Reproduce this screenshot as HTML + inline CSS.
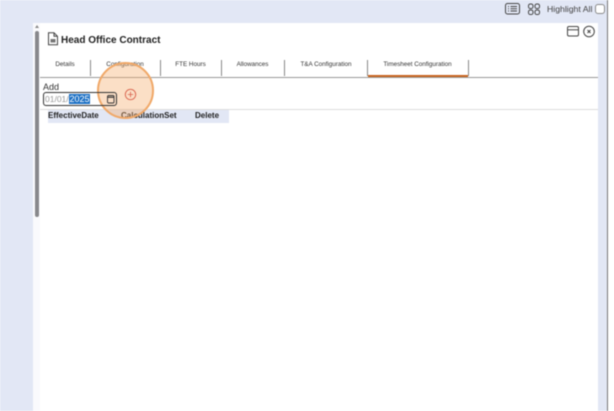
<!DOCTYPE html>
<html><head><meta charset="utf-8">
<style>
html,body{margin:0;padding:0;width:614px;height:411px;overflow:hidden;background:#fff}
body{position:relative;font-family:"Liberation Sans",sans-serif;color:#222}
#w{position:absolute;left:0;top:0;width:614px;height:411px;filter:blur(.4px)}
.a{position:absolute}
.t{position:absolute;top:60px;font-size:6.3px;line-height:9px;color:#333;white-space:nowrap;transform:translateX(-50%)}
.s{position:absolute;top:60px;width:1px;height:16px;background:#888}
.h{position:absolute;top:110px;font-size:8px;line-height:11px;font-weight:bold;color:#222;white-space:nowrap}
</style></head><body>
<div id="w">
<div class="a" style="left:0;top:0;width:607px;height:411px;background:#e2e7f5"></div>
<div class="a" style="left:607px;top:0;width:1px;height:411px;background:#777"></div>
<div class="a" style="left:33px;top:23px;width:565px;height:388px;background:#fff"></div>
<div class="a" style="left:33px;top:23px;width:7px;height:388px;background:#fafafd"></div>
<div class="a" style="left:35px;top:31px;width:4px;height:186px;background:#88888c;border-radius:2px"></div>
<div class="a" style="left:35px;top:25px;width:0;height:0;border-left:2px solid transparent;border-right:2px solid transparent;border-bottom:3px solid #888"></div>

<svg class="a" style="left:504px;top:2px" width="18" height="14" viewBox="0 0 18 14" fill="none" stroke="#444" stroke-width="1">
<rect x="1.500" y="1.500" width="14" height="10.500" rx="2"/><path d="M4 4.500h1M4 6.800h1M4 9h1M6.500 4.500h6.500M6.500 6.800h6.500M6.500 9h6.500"/></svg>
<svg class="a" style="left:527px;top:3px" width="14" height="13" viewBox="0 0 14 13" fill="none" stroke="#444" stroke-width="1">
<rect x="1.500" y="1" width="4.500" height="4.500" rx="1.800"/><rect x="8" y="1" width="4.500" height="4.500" rx="1.800"/>
<rect x="1.500" y="7" width="4.500" height="4.500" rx="1.800"/><rect x="8" y="7" width="4.500" height="4.500" rx="1.800"/></svg>
<div class="a" style="left:547px;top:4px;font-size:8.700px;line-height:11px;color:#444;white-space:nowrap">Highlight All</div>
<div class="a" style="left:595px;top:4px;width:8px;height:8px;border:1px solid #888;border-radius:3px;background:#fff"></div>

<svg class="a" style="left:47px;top:32px" width="12" height="14" viewBox="0 0 12 14" fill="none" stroke="#444" stroke-width="1">
<path d="M1.500 .8h5.500l3.500 3.500v8.500h-9zM7 .8v3.500h3.500"/><rect x="3.500" y="7" width="5" height="3.500" fill="#777" stroke="none"/></svg>
<div class="a" style="left:61px;top:33.500px;font-size:10px;line-height:13px;font-weight:bold;color:#222;white-space:nowrap">Head Office Contract</div>

<svg class="a" style="left:566px;top:24px" width="30" height="14" viewBox="0 0 30 14" fill="none" stroke="#444" stroke-width="1">
<rect x="1.500" y="2.500" width="11" height="9.500" rx="1.500"/><path d="M1.500 5.800h11"/>
<circle cx="23" cy="7.500" r="5.300"/><path d="M21.500 6l3 3M24.500 6l-3 3"/></svg>

<div class="t" style="left:65px">Details</div>
<div class="t" style="left:125px">Configuration</div>
<div class="t" style="left:190.500px">FTE Hours</div>
<div class="t" style="left:252.500px">Allowances</div>
<div class="t" style="left:326px">T&amp;A Configuration</div>
<div class="t" style="left:417.500px">Timesheet Configuration</div>
<div class="s" style="left:90px"></div>
<div class="s" style="left:160px"></div>
<div class="s" style="left:221px"></div>
<div class="s" style="left:284px"></div>
<div class="s" style="left:367px"></div>
<div class="s" style="left:468px"></div>
<div class="a" style="left:40px;top:77px;width:558px;height:1px;background:#999"></div>
<div class="a" style="left:368px;top:75px;width:100px;height:2px;background:#c8641e"></div>

<div class="a" style="left:43px;top:82px;font-size:9px;line-height:11px;color:#333">Add</div>
<div class="a" style="left:45px;top:94px;font-size:8.500px;line-height:10px;color:#999;white-space:nowrap">01/01/</div>
<div class="a" style="left:69px;top:94px;width:21px;height:10px;background:#1a6fc4;color:#fff;font-size:9px;line-height:10px;text-align:center">2025</div>

<div class="a" style="left:40px;top:109px;width:558px;height:1px;background:#ddd"></div>
<div class="a" style="left:48px;top:110px;width:181px;height:13px;background:#e2e7f5"></div>
<div class="h" style="left:48px">EffectiveDate</div>
<div class="h" style="left:121px">CalculationSet</div>
<div class="h" style="left:195px">Delete</div>

<div class="a" style="left:97px;top:62px;width:53px;height:53px;border:2px solid #f0a868;border-radius:50%;background:rgba(245,170,105,.38)"></div>
<div class="a" style="left:43px;top:92px;width:72px;height:12px;border:1px solid #333;border-radius:3px"></div>
<svg class="a" style="left:106px;top:94px" width="10" height="11" viewBox="0 0 10 11" fill="none" stroke="#333" stroke-width=".9">
<rect x="1.500" y="1.500" width="6.500" height="7.500" rx="1"/><path d="M1.500 3.200h6.500" stroke-width="1.200"/></svg>
<svg class="a" style="left:124px;top:88px" width="13" height="13" viewBox="0 0 13 13" fill="none" stroke="#d9604a" stroke-width=".9">
<circle cx="6.500" cy="6.500" r="5.200"/><path d="M6.500 3.800v5.400M3.800 6.500h5.400" stroke-width=".8"/></svg>
</div>
</body></html>
